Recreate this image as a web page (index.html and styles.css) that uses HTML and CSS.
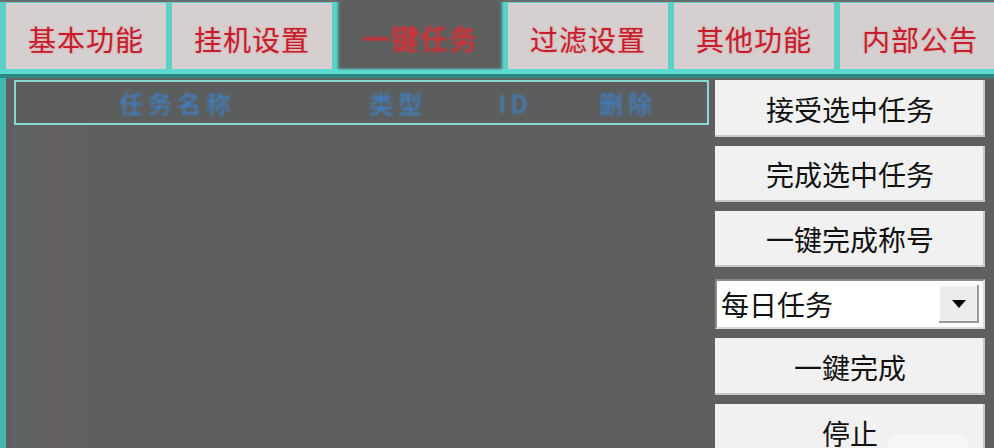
FILE: index.html
```html
<!DOCTYPE html>
<html lang="zh-CN">
<head>
    <meta charset="UTF-8">
    <meta name="viewport" content="width=device-width, initial-scale=1.0">
    <title>一键任务</title>
    <link rel="stylesheet" href="styles.css">
</head>
<body>
    <div class="window">
        <div class="tabs">
            <div class="tab">基本功能</div>
            <div class="tab">挂机设置</div>
            <div class="tab active">一键任务</div>
            <div class="tab">过滤设置</div>
            <div class="tab">其他功能</div>
            <div class="tab">内部公告</div>
        </div>
        <div class="tab-line"></div>

        <div class="panel">
            <div class="task-list">
                <div class="list-head">
                    <span>任务名称</span>
                    <span>类型</span>
                    <span>ID</span>
                    <span>删除</span>
                    <span></span>
                </div>
                <div class="list-body"></div>
            </div>

            <div class="actions">
                <button class="btn">接受选中任务</button>
                <button class="btn">完成选中任务</button>
                <button class="btn">一键完成称号</button>
                <div class="select">
                    <span class="select-text">每日任务</span>
                    <span class="select-arrow"></span>
                </div>
                <button class="btn">一鍵完成</button>
                <button class="btn">停止</button>
            </div>
        </div>
        <div class="mark"></div>
    </div>
</body>
</html>
```

FILE: styles.css
```css
html, body {
    margin: 0;
    padding: 0;
    width: 994px;
    height: 448px;
    overflow: hidden;
    background-color: #5f5f5f;
}

body {
    font-family: "Noto Sans CJK SC", "Noto Sans", sans-serif;
}

.window {
    position: relative;
    height: 448px;
    display: flex;
    flex-direction: column;
}

/* tab strip */
.tabs {
    flex-shrink: 0;
    display: flex;
    gap: 6px;
    height: 69px;
    padding: 0 0 0 6px;
    background-color: #5ccfc8;
    border-top: 2px solid #6a6a6a;
    box-sizing: border-box;
}

.tab {
    flex: 1;
    display: flex;
    align-items: center;
    justify-content: center;
    margin-top: 1px;
    padding-top: 6px;
    background-color: #d5cfcf;
    color: #c41e2e;
    font-size: 28px;
    letter-spacing: 1px;
    text-shadow: 0 0 2px rgba(255, 80, 90, 0.5);
}

.tab:last-child {
    margin-right: -6px;
}

.tab.active {
    margin-top: -2px;
    background-color: #5d5f5e;
    color: #e8222a;
    border-left: 2px solid #4e6e6b;
    border-right: 2px solid #4e6e6b;
    filter: blur(1.3px);
}

.tab-line {
    flex-shrink: 0;
    height: 5px;
    background-color: #5bdad2;
    border-bottom: 4px solid #2c8883;
}

/* main area */
.panel {
    flex: 1;
    min-height: 0;
    overflow: hidden;
    display: flex;
    gap: 6px;
    padding: 2px 9px 0 8px;
    border-left: 6px solid #43b7ae;
}

.task-list {
    width: 696px;
    display: flex;
    flex-direction: column;
}

.list-head {
    flex-shrink: 0;
    display: grid;
    grid-template-columns: 322px 120px 115px 110px 1fr;
    height: 45px;
    align-items: center;
    border: 2px solid #86d8d0;
    box-sizing: border-box;
    background-color: #5c5e5e;
}

.list-head span {
    text-align: center;
    color: #3a86d6;
    font-size: 24px;
    letter-spacing: 5px;
    filter: blur(1.2px);
}

.list-body {
    flex: 1;
    background: linear-gradient(to right, #5a6464 0, #646060 40px, #615f5f 70px, #5f5f5f 80px);
}

.actions {
    flex-shrink: 0;
    width: 270px;
    display: flex;
    flex-direction: column;
    gap: 9px;
}

.btn {
    flex-shrink: 0;
    height: 57px;
    border: none;
    border-radius: 0;
    background-color: #f1f1f1;
    color: #111;
    font-family: inherit;
    font-size: 28px;
    padding: 0;
    box-shadow: inset -2px -2px 0 #c9c9c9;
}

.actions .btn:nth-of-type(2),
.actions .btn:nth-of-type(3) {
    height: 56px;
}

.select {
    flex-shrink: 0;
    height: 50px;
    margin-top: 3px;
    display: flex;
    align-items: center;
    background-color: #fff;
    border: 2px solid #8a8a8a;
    border-right-color: #dcdcdc;
    border-bottom-color: #dcdcdc;
    box-sizing: border-box;
}

.select-text {
    flex: 1;
    padding-left: 4px;
    font-size: 28px;
    color: #111;
}

.select-arrow {
    width: 40px;
    height: 38px;
    margin-right: 4px;
    background-color: #ececec;
    box-shadow: inset -2px -2px 0 #9a9a9a, inset 1px 1px 0 #fff;
    display: flex;
    align-items: center;
    justify-content: center;
}

.select-arrow::after {
    content: "";
    border-left: 7px solid transparent;
    border-right: 7px solid transparent;
    border-top: 8px solid #000;
}

/* faint stamp in the corner */
.mark {
    position: absolute;
    left: 888px;
    top: 434px;
    width: 80px;
    height: 30px;
    border-radius: 10px;
    background-color: #f7f7f7;
}
```
